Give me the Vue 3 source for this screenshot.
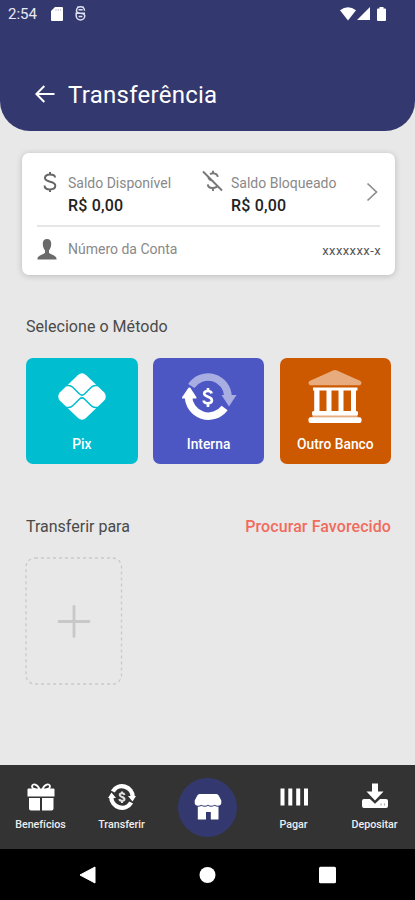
<script setup>
const navLeft = [
  { id: 'gift', label: 'Benefícios' },
  { id: 'transfer', label: 'Transferir' }
]
const navRight = [
  { id: 'pay', label: 'Pagar' },
  { id: 'deposit', label: 'Depositar' }
]
</script>

<template>
  <div class="screen">
    <header class="header">
      <div class="status">
        <span class="clock">2:54</span>
        <svg class="sd" width="12" height="14" viewBox="0 0 12 14"><path d="M4 0h7q1 0 1 1v12q0 1-1 1H1q-1 0-1-1V4z" fill="#fff" /><path d="M5 2v2M7.300 2v2M9.600 2v2" stroke="#b9bbd4" stroke-width=".8" /></svg>
        <svg class="bug" width="11" height="15" viewBox="0 0 11 15" fill="none" stroke="#dfe1f1" stroke-width="1.500"><path d="M9.500 4.700A4 4 0 0 0 1.500 4.700Q1.500 7 5.500 7.200T9.800 9.800A4.300 4.100 0 0 1 1.200 9.800V7.200H10M3.500 3.800h4.200M3.600 10.600h3.800M2.500.5l1 1.500M8.500.5l-1 1.500" /></svg>
        <div class="signals">
          <svg width="16" height="14" viewBox="0 0 16 14"><path d="M0 3.200Q8-2.800 16 3.200L8 13.500z" fill="#fff" /></svg>
          <svg width="13" height="13" viewBox="0 0 13 13"><path d="M13 0V13H0z" fill="#fff" /></svg>
          <svg class="battery" width="9" height="14" viewBox="0 0 9 14"><path d="M2.500 0h4v1.500H8q1 0 1 1V13q0 1-1 1H1q-1 0-1-1V2.500q0-1 1-1h1.500z" fill="#fff" /></svg>
        </div>
      </div>
      <div class="title-row">
        <svg width="20" height="18" viewBox="0 0 20 18" fill="none" stroke="#fff" stroke-width="2"><path d="M19.500 9H1.500M9.300 1L1.400 9l7.900 8" /></svg>
        <h1>Transferência</h1>
      </div>
    </header>

    <main>
      <section class="card">
        <div class="balances">
          <svg class="dollar" width="14" height="22" viewBox="0 0 14 22" fill="none" stroke="#666" stroke-width="2"><path d="M12 6.500C12 4.500 9.900 3.600 7 3.600S2 4.800 2 7.100C2 12 12.300 9.300 12.300 14.500c0 2.400-2.200 3.900-5.300 3.900s-5.400-1.500-5.400-4M7 1v3M7 18v3" /></svg>
          <div class="balance">
            <span class="label">Saldo Disponível</span>
            <strong>R$ 0,00</strong>
          </div>
          <svg class="blocked" width="21" height="22" viewBox="0 0 21 22" fill="none" stroke="#777" stroke-width="1.900"><path d="M1 1.500L20 20.500M8 4.200C11 2.400 15.500 3.400 15.800 6.800M6.300 7.300C6.800 10 9 10.200 11.400 11M15.600 15.800C14 18.800 6 19.200 5.800 14.400M11 .8v3M11 18v3" /></svg>
          <div class="balance">
            <span class="label">Saldo Bloqueado</span>
            <strong>R$ 0,00</strong>
          </div>
          <svg class="chevron" width="12" height="20" viewBox="0 0 12 20" fill="none" stroke="#8c8c8c" stroke-width="1.700"><path d="M1.500 1.500L10.500 10 1.500 18.500" /></svg>
        </div>
        <div class="account">
          <svg width="20" height="21" viewBox="0 0 20 21"><path d="M10 0c3 0 4.300 2 4.200 5.200C14.100 8 13.200 10 12 11.300v2.500c1 1.700 7.500 2.700 7.500 5.700V20.500H.5v-1c0-3 6.500-4 7.500-5.700v-2.500C6.800 10 5.900 8 5.800 5.200 5.700 2 7 0 10 0z" fill="#6a6a6a" /></svg>
          <span class="label">Número da Conta</span>
          <span class="number">xxxxxxx-x</span>
        </div>
      </section>

      <h2 class="method-title">Selecione o Método</h2>
      <div class="methods">
        <button class="method pix">
          <svg width="60" height="56" viewBox="0 0 60 56">
            <path d="M25.800 6.200q4.200-3.800 8.400 0L52 23.300q3.800 4.200 0 8.400L34.200 48.800q-4.200 3.800-8.400 0L8 31.700q-3.800-4.200 0-8.400z" fill="#fff" />
            <path d="M13 16.500h3.500q2.500 0 4.500 2l6.500 6.500q2.500 2.200 5 0l6.500-6.500q2-2 4.500-2H47M13 38.500h3.500q2.500 0 4.500-2l6.500-6.500q2.500-2.200 5 0l6.500 6.500q2 2 4.500 2H47" fill="none" stroke="#00bdcf" stroke-width="1.500" />
          </svg>
          <span>Pix</span>
        </button>
        <button class="method internal">
          <svg width="60" height="56" viewBox="0 0 60 56" fill="none">
            <path d="M12.300 17A20 20 0 0 1 49 27.500" stroke="#a8ade2" stroke-width="7.500" />
            <path d="M42.500 26H57.500L50 37.500z" fill="#a8ade2" />
            <path d="M9.500 27A20 20 0 0 0 45.600 39" stroke="#fff" stroke-width="7.500" />
            <path d="M3.500 29.500Q2.500 29.500 3.200 28L9.500 18.800Q10.400 18 11.300 18.800L17.300 28Q18 29.500 17 29.500z" fill="#fff" />
            <path d="M32.500 24.500C32.200 21.300 25.200 21 25.200 24.600 25.200 28.500 32.900 27.200 32.900 31.400 32.900 35.400 25 35.200 24.700 31.500M29 19v3M29 34v4" stroke="#fff" stroke-width="2.700" />
          </svg>
          <span>Interna</span>
        </button>
        <button class="method bank">
          <svg width="60" height="56" viewBox="0 0 60 56">
            <path d="M28 1.500q2-1 4 0l23.500 10.500q1.500 1.300.8 3L55 16.200H5L3.700 15Q3 13.300 4.500 12z" fill="#e8ab7d" />
            <path d="M8 18.500H52.500V21.500H51V42H9.200V21.500H8zM14.500 21.500V42h7V21.500zM26.500 21.500V42h7V21.500zM38.500 21.500V42h7.500V21.500z" fill="#fff" fill-rule="evenodd" />
            <rect x="7.500" y="46" width="45" height="2.500" fill="#e8ab7d" />
            <rect x="7" y="42" width="46" height="4.500" rx="1.500" fill="#fff" /><rect x="3.500" y="48.200" width="53" height="5.800" rx="2" fill="#fff" />
          </svg>
          <span>Outro Banco</span>
        </button>
      </div>

      <div class="favorites-head">
        <h2>Transferir para</h2>
        <a>Procurar Favorecido</a>
      </div>
      <button class="add">
        <svg width="98" height="128" viewBox="0 0 98 128" fill="none">
          <rect x="1" y="1" width="95.500" height="126" rx="9" stroke="#c9c9c9" stroke-width="1.300" stroke-dasharray="3 3" />
          <path d="M34 64.500H64M49 49.500V79.500" stroke="#c8c8c8" stroke-width="2.800" stroke-linecap="round" />
        </svg>
      </button>
    </main>

    <nav class="tabs">
      <a v-for="item in navLeft" :key="item.id" class="tab">
        <svg v-if="item.id === 'gift'" width="30" height="30" viewBox="0 0 30 30">
          <path d="M2.500 6.500H27.500q1 0 1 1V14.500H1.500V7.500q0-1 1-1zM3 16H14V28.500H5q-2 0-2-2zM16 16H27.500V26.500q0 2-2 2H16z" fill="#fff" />
          <path d="M13.500 7.500C12 2 6 1 6 4.500 6 6.500 8 7.500 13.500 7.500zM16.500 7.500C18 2 24 1 24 4.500 24 6.500 22 7.500 16.500 7.500z" stroke="#fff" stroke-width="1.800" fill="#333" />
        </svg>
        <svg v-else width="30" height="30" viewBox="0 0 30 30" fill="none">
          <path d="M5.800 9.500A10.700 10.700 0 0 1 25.700 15M24.200 20.500A10.700 10.700 0 0 1 4.300 15" stroke="#fff" stroke-width="4.400" />
          <path d="M21 14H29L25.500 19.500zM1 16H9L4.500 10.500z" fill="#fff" />
          <path d="M17.500 13C17 10.800 12.700 10.800 12.700 13.100 12.700 15.400 17.500 14.500 17.500 17.200 17.500 19.500 12.700 19.300 12.300 17M15 9.500v2M15 18.800v2.200" stroke="#e0e0e0" stroke-width="2" />
        </svg>
        <span>{{ item.label }}</span>
      </a>
      <a class="home">
        <svg width="28" height="28" viewBox="0 0 28 28">
          <path d="M5.500 1H22.500Q24 1 24.700 2.500L27.300 7.500V10q-.3 2.800-3.300 2.800-2.300 0-3.300-1Q19.500 12.800 17.300 12.800 15.200 12.800 14 11.800 12.800 12.800 10.700 12.800 8.500 12.800 7.300 11.800 6.300 12.800 4 12.800 1 12.800.7 10V7.500L3.300 2.500Q4 1 5.500 1z" fill="#fff" />
          <path d="M3.800 13.800q2.500 0 3.700-1 1.300 1 3.200 1 1.800 0 3.300-1 1.300 1 3.100 1 1.900 0 3.400-1Q21.800 13.800 24.500 13.800V26.500H16.800V19H12V26.500H3.800z" fill="#fff" />
        </svg>
      </a>
      <a v-for="item in navRight" :key="item.id" class="tab">
        <svg v-if="item.id === 'pay'" width="30" height="30" viewBox="0 0 30 30"><path d="M1.500 6.500h4v17h-4zM9.300 6.500h4v17H9.300zM17.200 6.500h4v17h-4zM25 6.500h4v17h-4z" fill="#fff" /></svg>
        <svg v-else width="30" height="30" viewBox="0 0 30 30">
          <path d="M12 1.500H18V9.500H23.500L15 18.500 6.500 9.500H12z" fill="#fff" />
          <path d="M4 17H9.900L15 21.800 20.100 17H26q2 0 2 2V24q0 2-2 2H4q-2 0-2-2V19q0-2 2-2z" fill="#fff" />
          <path d="M21 21.500v2M24.500 21.500v2" stroke="#aaa" stroke-width="1.200" />
        </svg>
        <span>{{ item.label }}</span>
      </a>
    </nav>

    <footer class="system">
      <svg width="17" height="18" viewBox="0 0 17 18"><path d="M16 1V17L1 9z" fill="#fff" stroke="#fff" stroke-linejoin="round" /></svg>
      <svg width="17" height="18" viewBox="0 0 17 18"><circle cx="8.500" cy="9" r="8" fill="#fff" /></svg>
      <svg width="17" height="18" viewBox="0 0 17 18"><rect y=".7" width="17" height="16.600" rx="1.500" fill="#fff" /></svg>
    </footer>
  </div>
</template>

<style>
body { margin: 0; background: #e8e8e8; }
</style>

<style scoped>
* { box-sizing: border-box; }
.screen { width: 415px; height: 900px; display: flex; flex-direction: column; background: #e8e8e8; font-family: Roboto, sans-serif; overflow: hidden; }
svg { display: block; flex: none; }
h1, h2 { margin: 0; font-weight: 400; }
button { border: 0; padding: 0; background: none; font: inherit; }
.header { height: 131px; flex: none; background: #33396f; border-radius: 0 0 30px 30px; color: #fff; }
.status { height: 27px; display: flex; align-items: center; padding: 0 29px 0 8px; }
.clock { width: 43px; font-size: 15px; color: #e9eaf5; }
.bug { margin-left: 12px; }
.signals { margin-left: auto; display: flex; align-items: center; gap: 1px; }
.battery { margin-left: 6px; }
.title-row { display: flex; align-items: center; gap: 13px; padding-left: 35px; height: 28px; margin-top: 53px; }
h1 { margin-top: 2px; font-size: 24px; line-height: 30px; letter-spacing: .27px; }
main { flex: 1; padding: 22px 24px 0 26px; }
.card { height: 122px; margin: 0 -4px; border-radius: 7px; background: #fff; box-shadow: 0 1px 6px rgba(0, 0, 0, .2); padding: 0 15px; }
.balances { height: 74px; display: grid; grid-template-columns: 31px 134px 29px 1fr 12px; border-bottom: 2px solid #e6e6e6; padding-top: 18px; }
.dollar { margin-left: 6px; }
.blocked { margin-top: -1px; }
.balance { display: flex; flex-direction: column; }
.label { font-size: 14px; line-height: 24px; color: #898989; }
.balance strong { font-size: 16px; line-height: 22px; font-weight: 500; letter-spacing: .2px; color: #222; }
.chevron { margin: 11px 0 0 -2px; }
.account { display: flex; height: 46px; align-items: center; }
.account svg { margin-top: -1px; }
.account .label { margin: -2px 0 0 11px; }
.number { margin: 0 -1px 0 auto; font-size: 13px; letter-spacing: .4px; color: #555; }
h2 { font-size: 16px; line-height: 20px; color: #4a4a4a; }
.method-title { margin-top: 42px; letter-spacing: .04px; }
.methods { display: grid; grid-template-columns: repeat(3, 111.6px); gap: 15.2px; margin-top: 21px; }
.method { height: 106px; border-radius: 7px; display: flex; flex-direction: column; align-items: center; padding-top: 11px; color: #fff; font-size: 13.8px; font-weight: 500; }
.method span { line-height: 18px; margin-top: 10px; }
.pix { background: #00bdcf; }
.internal { background: #4d57c3; }
.bank { background: #cc5900; }
.favorites-head { display: flex; justify-content: space-between; margin-top: 53px; }
.favorites-head a { font-size: 16px; line-height: 20px; font-weight: 500; letter-spacing: .08px; color: #f16b5d; }
.add { display: block; margin: 20px 0 0 -1px; }
.tabs { height: 84px; flex: none; background: #333; display: grid; grid-template-columns: 81px 81px 91px 81px 81px; }
.tab { display: flex; flex-direction: column; align-items: center; padding-top: 17px; color: #eee; font-size: 10.7px; font-weight: 500; }
.tab span { margin-top: 6px; line-height: 14px; }
.home { width: 59px; height: 59px; margin: 13px auto 0; border-radius: 50%; background: #33396f; display: grid; place-items: center; }
.home svg { margin-top: -2px; }
.system { height: 51px; flex: none; background: #000; display: flex; align-items: center; justify-content: space-between; padding: 1px 79px 0; }
</style>
